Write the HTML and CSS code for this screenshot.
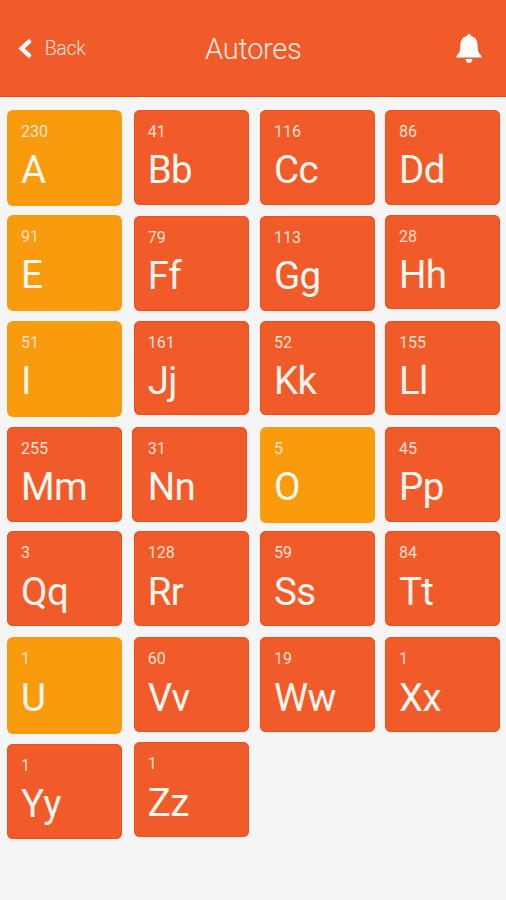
FILE: index.html
```html
<!DOCTYPE html>
<html lang="en">
<head>
<meta charset="utf-8">
<title>Autores</title>
<link rel="stylesheet" href="styles.css">
</head>
<body>
<header class="bar">
  <a class="back"><svg class="chevron" viewBox="0 0 14 19"><path d="M11 2.700 3.600 9.500l7.400 6.800" fill="none" stroke="#fff" stroke-width="4.400" stroke-linecap="round"/></svg><span>Back</span></a>
  <h1 class="title">Autores</h1>
  <svg class="bell" viewBox="0 0 26 30"><path d="M13 0c1.200 0 1.900.8 2 2 3.900.8 6.300 3.900 6.500 8 .2 5.600.6 8.500 3 10.800.7.700 1.100 1.200 1.100 2.600H.4c0-1.400.4-1.900 1.100-2.600 2.400-2.300 2.800-5.200 3-10.800.2-4.100 2.600-7.200 6.500-8 .1-1.200.8-2 2-2z"/><path d="M9.600 25h6.800c-.2 2.500-1.500 4-3.400 4s-3.200-1.500-3.400-4z"/></svg>
</header>
<main class="grid">
  <div class="card vowel"><span class="count">230</span><span class="letter">A</span></div>
  <div class="card"><span class="count">41</span><span class="letter">Bb</span></div>
  <div class="card"><span class="count">116</span><span class="letter">Cc</span></div>
  <div class="card"><span class="count">86</span><span class="letter">Dd</span></div>
  <div class="card vowel"><span class="count">91</span><span class="letter">E</span></div>
  <div class="card low"><span class="count">79</span><span class="letter">Ff</span></div>
  <div class="card low"><span class="count">113</span><span class="letter">Gg</span></div>
  <div class="card"><span class="count">28</span><span class="letter">Hh</span></div>
  <div class="card vowel"><span class="count">51</span><span class="letter">I</span></div>
  <div class="card"><span class="count">161</span><span class="letter">Jj</span></div>
  <div class="card"><span class="count">52</span><span class="letter">Kk</span></div>
  <div class="card"><span class="count">155</span><span class="letter">Ll</span></div>
  <div class="card"><span class="count">255</span><span class="letter">Mm</span></div>
  <div class="card shifted"><span class="count">31</span><span class="letter">Nn</span></div>
  <div class="card vowel"><span class="count">5</span><span class="letter">O</span></div>
  <div class="card"><span class="count">45</span><span class="letter">Pp</span></div>
  <div class="card"><span class="count">3</span><span class="letter">Qq</span></div>
  <div class="card"><span class="count">128</span><span class="letter">Rr</span></div>
  <div class="card"><span class="count">59</span><span class="letter">Ss</span></div>
  <div class="card"><span class="count">84</span><span class="letter">Tt</span></div>
  <div class="card vowel"><span class="count">1</span><span class="letter">U</span></div>
  <div class="card"><span class="count">60</span><span class="letter">Vv</span></div>
  <div class="card"><span class="count">19</span><span class="letter">Ww</span></div>
  <div class="card"><span class="count">1</span><span class="letter">Xx</span></div>
  <div class="card"><span class="count">1</span><span class="letter">Yy</span></div>
  <div class="card raised"><span class="count">1</span><span class="letter">Zz</span></div>
</main>
</body>
</html>
```
FILE: styles.css
```css
* { box-sizing: border-box; }

body {
  margin: 0;
  height: 900px;
  overflow: hidden;
  background: #f5f5f5;
  font-family: Roboto, "Liberation Sans", sans-serif;
  color: #fff;
}

.bar {
  display: grid;
  grid-template-columns: 1fr auto 1fr;
  align-items: center;
  height: 97px;
  padding: 0 24.500px 0 18px;
  background: #f15a29;
  border-bottom: 1px solid #ea4a12;
}

.back {
  display: flex;
  align-items: center;
  gap: 12.700px;
  font-size: 19.500px;
  font-weight: 300;
  letter-spacing: -0.300px;
  line-height: 24px;
  color: #ffe3d8;
}

.back span { padding-top: 2px; }

.chevron { width: 14px; height: 19px; }

.title {
  margin: 2px -3.500px 0 3.500px;
  font-size: 29px;
  font-weight: 300;
  letter-spacing: -0.300px;
  line-height: 36px;
  color: #ffe9e0;
}

.bell {
  justify-self: end;
  width: 26px;
  height: 30px;
  margin-top: 1px;
  fill: #fff;
}

.grid {
  display: grid;
  grid-template-columns: 126.700px 126.300px 125px 115px;
  grid-template-rows: 104.500px 106px 106.500px 104.300px 106.200px 106.500px 96px;
  padding: 13px 0 0 7px;
}

.card {
  display: flex;
  flex-direction: column;
  width: 115px;
  height: 94.600px;
  padding: 12px 0 0 14px;
  border-radius: 6px;
  background: #f15a29;
  box-shadow: inset 0 0 0 1px #f0501b;
}

.vowel {
  height: 96.300px;
  background: #f89b0d;
  box-shadow: none;
}

.low { margin-top: 1.700px; }

.raised { margin-top: -1.700px; }

.shifted {
  margin-left: -1.700px;
  padding-left: 15.700px;
}

.count {
  font-size: 16px;
  line-height: 19px;
  color: #ffe0cf;
}

.letter {
  margin-top: 6.300px;
  font-size: 38.500px;
  letter-spacing: -0.600px;
  line-height: 46px;
  color: #fff6ee;
}
```
